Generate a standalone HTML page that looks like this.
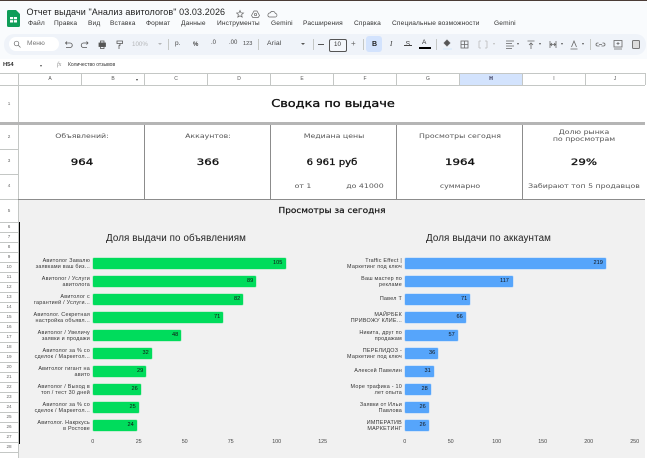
<!DOCTYPE html>
<html lang="ru"><head><meta charset="utf-8"><style>
html,body{margin:0;padding:0}
body{width:647px;height:458px;overflow:hidden;background:#fff;position:relative;font-family:"Liberation Sans",sans-serif;color:#222}
div,span{position:absolute}
.t{white-space:nowrap;line-height:1}
.m{font-size:6.6px;top:21px;color:#333;letter-spacing:.15px}
.h{font-size:5px;top:77px;color:#555;transform:translateX(-50%)}
.r{font-size:4.6px;color:#666;left:0;width:18px;text-align:center}
.l{background:#c4c7c5}
.k{font-family:"DejaVu Sans",sans-serif;color:#555;font-size:6.3px;transform:translateX(-50%) scaleX(1.24);text-align:center;line-height:7.5px;white-space:nowrap}
.v{font-family:"DejaVu Sans",sans-serif;color:#111;-webkit-text-stroke:.3px #111;font-size:9.2px;transform:translateX(-50%) scaleX(1.28);white-space:nowrap;line-height:1}
.b{height:11px;border-radius:1px}
.g{background:#00dc5c;box-shadow:0 0 0 .5px #9ce8b8}
.u{background:#56a5fb;box-shadow:0 0 0 .5px #b3d5fa}
.x{font-size:5.4px;line-height:6.5px;text-align:right;color:#333;white-space:nowrap;letter-spacing:.25px}
.n{font-size:5.6px;color:#111;line-height:1;white-space:nowrap}
.a{font-size:5.4px;color:#444;top:439.500px;transform:translateX(-50%);line-height:1}
svg{position:absolute}
.d{width:0;height:0;border:1.500px solid transparent;border-top:2px solid #555}
</style></head><body>
<div style="left:0;top:0;width:647px;height:73px;background:#f9fbfd"></div>
<div style="left:0;top:0;width:647px;height:1px;background:#4b3c36"></div>

<svg style="left:6.500px;top:10px" width="13" height="17" viewBox="0 0 13 17"><path d="M1.500 0H9l4 4v11.500a1.500 1.500 0 0 1-1.500 1.500h-10A1.500 1.500 0 0 1 0 15.500v-14A1.500 1.500 0 0 1 1.500 0z" fill="#0f9d58"/><rect x="3" y="7" width="7" height="5.500" fill="#fff"/><path d="M3 9.700h7M6.500 7v5.500" stroke="#0f9d58" stroke-width=".8"/></svg>
<span class="t" style="left:26.500px;top:7.500px;font-size:9px;color:#222;letter-spacing:.1px">Отчет выдачи "Анализ авитологов" 03.03.2026</span>
<svg style="left:236px;top:8.500px" width="50" height="10" viewBox="0 0 50 10" fill="none" stroke="#666" stroke-width=".7"><path d="M4 1.500l1 2.300 2.500.2-1.900 1.600.6 2.500L4 6.800 1.800 8.100l.6-2.500L.5 4 3 3.800z"/><path d="M18 2h3l2.500 4.500-1.300 2h-5.400l-1.300-2z"/><circle cx="19.500" cy="5.500" r="1.200"/><path d="M33 8h6a1.800 1.800 0 0 0 .3-3.600 2.800 2.800 0 0 0-5.200-.5A2.200 2.200 0 0 0 33 8z"/></svg>

<span class="t m" style="left:28px">Файл</span><span class="t m" style="left:54px">Правка</span><span class="t m" style="left:88px">Вид</span><span class="t m" style="left:110px">Вставка</span><span class="t m" style="left:146px">Формат</span><span class="t m" style="left:181px">Данные</span><span class="t m" style="left:217px">Инструменты</span><span class="t m" style="left:271px">Gemini</span><span class="t m" style="left:303px">Расширения</span><span class="t m" style="left:354px">Справка</span><span class="t m" style="left:392px">Специальные возможности</span><span class="t m" style="left:494px">Gemini</span>

<div style="left:4px;top:34px;width:642px;height:21px;border-radius:10px;background:#eff3f9"></div>
<div style="left:9px;top:37px;width:50px;height:14px;border-radius:7px;background:#fff"></div>
<svg style="left:13px;top:40px" width="9" height="9" viewBox="0 0 9 9" fill="none" stroke="#666" stroke-width=".7"><circle cx="3.500" cy="3.500" r="2.300"/><path d="M5.300 5.300L7.500 7.500"/></svg>
<span class="t" style="left:27px;top:41px;font-size:6.600px;color:#777">Меню</span>

<svg style="left:62px;top:38px" width="70" height="14" viewBox="0 0 70 14" fill="none" stroke="#555" stroke-width=".8">
<path d="M5 3.500L3.500 5 5 6.500M3.500 5H8a2.200 2.200 0 0 1 0 4.500H4"/>
<path d="M24.500 3.500L26 5l-1.500 1.500M26 5h-4.500a2.200 2.200 0 0 0 0 4.500H25"/>
<rect x="37" y="5" width="6.500" height="3.500" fill="#555"/><rect x="38.500" y="3" width="3.500" height="2"/><rect x="38.500" y="8.500" width="3.500" height="2"/>
<path d="M55 3h5.500v2.500H55zM58 5.500v2h-1v3.500"/>
</svg>
<span class="t" style="left:132px;top:41.500px;font-size:6.200px;color:#b4b6b8">100%</span>
<span style="left:158px;top:43px;width:0;height:0;border:2px solid transparent;border-top:2.500px solid #b4b6b8"></span>
<div class="l" style="left:168px;top:39px;width:.7px;height:11px"></div>
<span class="t" style="left:175px;top:41px;font-size:6.500px;color:#444">р.</span>
<span class="t" style="left:193px;top:41.500px;font-size:6px;color:#444;font-weight:bold">%</span>
<span class="t" style="left:211px;top:40px;font-size:6px;color:#444">.0</span><span class="t" style="left:229px;top:40px;font-size:6px;color:#444">.00</span>
<span class="t" style="left:243px;top:41.500px;font-size:5.600px;color:#444">123</span>
<div class="l" style="left:258px;top:39px;width:.7px;height:11px"></div>
<span class="t" style="left:267px;top:40.500px;font-size:6.800px;color:#444;letter-spacing:.2px">Arial</span>
<span style="left:301px;top:43px;width:0;height:0;border:2px solid transparent;border-top:2.500px solid #555"></span>
<div class="l" style="left:313px;top:39px;width:.7px;height:11px"></div>
<div style="left:318px;top:44px;width:6px;height:1px;background:#555"></div>
<div style="left:329px;top:38.500px;width:16px;height:11px;border:.8px solid #555;border-radius:2px;background:#f4f7fb"></div>
<span class="t" style="left:334px;top:41.500px;font-size:6.200px;color:#333">10</span>
<span class="t" style="left:351px;top:40px;font-size:8px;color:#666">+</span>
<div class="l" style="left:363px;top:39px;width:.7px;height:11px"></div>
<div style="left:366px;top:36px;width:16px;height:16px;border-radius:3px;background:#d3e3fd"></div>
<span class="t" style="left:372px;top:41px;font-size:7px;font-weight:bold;color:#222">B</span>
<span class="t" style="left:390px;top:41px;font-size:7px;font-style:italic;font-family:'Liberation Serif',serif;color:#333">I</span>
<span class="t" style="left:405.500px;top:41px;font-size:7px;color:#444">S</span><div style="left:404px;top:44.500px;width:8px;height:.8px;background:#444"></div>
<span class="t" style="left:422px;top:40px;font-size:6.500px;color:#333">A</span><div style="left:419px;top:47px;width:12px;height:1.600px;background:#000"></div>
<div class="l" style="left:436px;top:39px;width:.7px;height:11px"></div>
<svg style="left:442px;top:38px" width="204" height="13" viewBox="0 0 204 13" fill="none" stroke="#666" stroke-width=".8">
<path d="M2 5l3-3 3 3-3 3z" fill="#555"/><path d="M1 11h9" stroke="#dcecfb" stroke-width="1.400"/>
<rect x="19" y="3" width="7" height="7"/><path d="M22.500 3v7M19 6.500h7"/>
<path d="M37 3h2M37 10h2M43 3h2M43 10h2M37 3v7M45 3v7" stroke="#bbb"/>
<path d="M64 3h8M64 5.500h6M64 8h8M64 10.500h6"/>
<path d="M85.500 3h7M89 11V5"/><path d="M87 7l2-2 2 2"/>
<path d="M108 3v7M114 3v7M108 6.500h6M110 5l-1.500 1.500L110 8M112 5l1.500 1.500L112 8"/>
<path d="M129.500 9l2.500-6 2.500 6M128.500 11h7"/>
<path d="M156.500 5h-1a1.500 1.500 0 0 0 0 3h2M160.500 5h1a1.500 1.500 0 0 1 0 3h-2M157 6.500h3"/>
<rect x="172" y="2.500" width="8" height="6.500"/><path d="M176 4v3M174.500 5.500h3M172 11h8"/>
</svg>
<span class="d" style="left:492.500px;top:43px;border-top-color:#bbb"></span>
<span class="d" style="left:516.500px;top:43px"></span>
<span class="d" style="left:538.500px;top:43px"></span>
<span class="d" style="left:560.500px;top:43px"></span>
<span class="d" style="left:581.500px;top:43px"></span>
<div class="l" style="left:590px;top:39px;width:.7px;height:11px"></div>
<div style="left:632px;top:39.500px;width:6px;height:7px;border:.8px solid #777;border-radius:1.500px;background:#ddd"></div>

<div style="left:0;top:59px;width:647px;height:14px;background:#fff"></div>
<span class="t" style="left:3px;top:62.500px;font-size:5.800px;color:#333;font-weight:bold">H54</span>
<span style="left:40px;top:65px;width:0;height:0;border:1.500px solid transparent;border-top:2px solid #555"></span>
<span class="t" style="left:57px;top:62px;font-size:6px;font-style:italic;font-family:'Liberation Serif',serif;color:#888">fx</span>
<span class="t" style="left:68px;top:62.500px;font-size:5px;color:#333">Количество отзывов</span>

<div style="left:0;top:73px;width:647px;height:12px;background:#fff"></div>
<div style="left:459px;top:73.500px;width:63px;height:12px;background:#d3e3fd"></div>
<div class="l" style="left:0;top:73px;width:645px;height:.8px"></div>
<div class="l" style="left:0;top:85px;width:645px;height:1.200px"></div>
<span class="t h" style="left:50px">A</span><span class="t h" style="left:113px">B</span><span class="t h" style="left:176px">C</span><span class="t h" style="left:239px">D</span><span class="t h" style="left:302px">E</span><span class="t h" style="left:365px">F</span><span class="t h" style="left:428px">G</span><span class="t h" style="left:491px;font-weight:bold;color:#224">H</span><span class="t h" style="left:554px">I</span><span class="t h" style="left:615px">J</span>
<span style="left:136px;top:79px;width:0;height:0;border:1.500px solid transparent;border-top:2px solid #444"></span>
<div class="l" style="left:18px;top:73px;width:1px;height:385px"></div>
<div class="l" style="left:81px;top:73px;width:.8px;height:12px"></div><div class="l" style="left:144px;top:73px;width:.8px;height:12px"></div><div class="l" style="left:207px;top:73px;width:.8px;height:12px"></div><div class="l" style="left:270px;top:73px;width:.8px;height:12px"></div><div class="l" style="left:333px;top:73px;width:.8px;height:12px"></div><div class="l" style="left:396px;top:73px;width:.8px;height:12px"></div><div class="l" style="left:459px;top:73px;width:.8px;height:12px"></div><div class="l" style="left:522px;top:73px;width:.8px;height:12px"></div><div class="l" style="left:585px;top:73px;width:.8px;height:12px"></div><div class="l" style="left:645px;top:73px;width:.8px;height:12px"></div>

<span class="t" style="left:332.500px;top:98px;transform:translateX(-50%) scaleX(1.17);font-family:'DejaVu Sans',sans-serif;-webkit-text-stroke:.35px #111;font-size:11px;color:#111">Сводка по выдаче</span>
<div style="left:0;top:122px;width:645px;height:3px;background:#b5b5b5"></div>

<div style="left:18px;top:198.500px;width:627px;height:.9px;background:#8c8c8c"></div>
<div style="left:144px;top:125px;width:.9px;height:74px;background:#8c8c8c"></div><div style="left:270px;top:125px;width:.9px;height:74px;background:#8c8c8c"></div><div style="left:396px;top:125px;width:.9px;height:74px;background:#8c8c8c"></div><div style="left:522px;top:125px;width:.9px;height:74px;background:#8c8c8c"></div>

<span class="k" style="left:81.500px;top:133px">Объявлений:</span>
<span class="k" style="left:207.500px;top:133px">Аккаунтов:</span>
<span class="k" style="left:333.500px;top:133px">Медиана цены</span>
<span class="k" style="left:459.500px;top:133px">Просмотры сегодня</span>
<span class="k" style="left:584px;top:128.500px">Долю рынка<br>по просмотрам</span>
<span class="v" style="left:81.500px;top:158px">964</span>
<span class="v" style="left:207.500px;top:158px">366</span>
<span class="v" style="left:331.500px;top:158px;transform:translateX(-50%) scaleX(1.1)">6 961 руб</span>
<span class="v" style="left:459.500px;top:158px">1964</span>
<span class="v" style="left:584px;top:158px">29%</span>
<span class="k" style="left:302.500px;top:183px">от 1</span>
<span class="k" style="left:365px;top:183px">до 41000</span>
<span class="k" style="left:459.500px;top:183px">суммарно</span>
<span class="k" style="left:584.300px;top:183px">Забирают топ 5 продавцов</span>

<div style="left:19px;top:199.500px;width:626px;height:258.500px;background:#f1f1f1"></div>
<span class="v" style="left:332px;top:207px;font-size:8px;-webkit-text-stroke:.2px #111;transform:translateX(-50%) scaleX(1.12)">Просмотры за сегодня</span>
<div style="left:19px;top:222px;width:1px;height:222px;background:#000"></div>

<div class="l" style="left:0;top:149px;width:18px;height:.8px"></div><div class="l" style="left:0;top:174px;width:18px;height:.8px"></div><div class="l" style="left:0;top:199px;width:18px;height:.8px"></div><div class="l" style="left:0;top:222px;width:18px;height:.8px"></div><div class="l" style="left:0;top:232px;width:18px;height:.8px"></div><div class="l" style="left:0;top:242px;width:18px;height:.8px"></div><div class="l" style="left:0;top:252px;width:18px;height:.8px"></div><div class="l" style="left:0;top:262px;width:18px;height:.8px"></div><div class="l" style="left:0;top:272px;width:18px;height:.8px"></div><div class="l" style="left:0;top:282px;width:18px;height:.8px"></div><div class="l" style="left:0;top:292px;width:18px;height:.8px"></div><div class="l" style="left:0;top:302px;width:18px;height:.8px"></div><div class="l" style="left:0;top:312px;width:18px;height:.8px"></div><div class="l" style="left:0;top:322px;width:18px;height:.8px"></div><div class="l" style="left:0;top:332px;width:18px;height:.8px"></div><div class="l" style="left:0;top:342px;width:18px;height:.8px"></div><div class="l" style="left:0;top:352px;width:18px;height:.8px"></div><div class="l" style="left:0;top:362px;width:18px;height:.8px"></div><div class="l" style="left:0;top:372px;width:18px;height:.8px"></div><div class="l" style="left:0;top:382px;width:18px;height:.8px"></div><div class="l" style="left:0;top:392px;width:18px;height:.8px"></div><div class="l" style="left:0;top:402px;width:18px;height:.8px"></div><div class="l" style="left:0;top:412px;width:18px;height:.8px"></div><div class="l" style="left:0;top:422px;width:18px;height:.8px"></div><div class="l" style="left:0;top:432px;width:18px;height:.8px"></div><div class="l" style="left:0;top:442px;width:18px;height:.8px"></div><div class="l" style="left:0;top:452px;width:18px;height:.8px"></div>

<span class="t r" style="top:101.500px">1</span><span class="t r" style="top:135px">2</span><span class="t r" style="top:159px">3</span><span class="t r" style="top:184px">4</span><span class="t r" style="top:208.500px">5</span><span class="t r" style="top:225px">6</span><span class="t r" style="top:235px">7</span><span class="t r" style="top:245px">8</span><span class="t r" style="top:255px">9</span><span class="t r" style="top:265px">10</span><span class="t r" style="top:275px">11</span><span class="t r" style="top:285px">12</span><span class="t r" style="top:295px">13</span><span class="t r" style="top:305px">14</span><span class="t r" style="top:315px">15</span><span class="t r" style="top:325px">16</span><span class="t r" style="top:335px">17</span><span class="t r" style="top:345px">18</span><span class="t r" style="top:355px">19</span><span class="t r" style="top:365px">20</span><span class="t r" style="top:375px">21</span><span class="t r" style="top:385px">22</span><span class="t r" style="top:395px">23</span><span class="t r" style="top:405px">24</span><span class="t r" style="top:415px">25</span><span class="t r" style="top:425px">26</span><span class="t r" style="top:435px">27</span><span class="t r" style="top:445px">28</span>

<span class="t" style="left:176px;top:234px;font-size:9.800px;color:#222;transform:translateX(-50%);letter-spacing:.12px">Доля выдачи по объявлениям</span>
<span class="t" style="left:488.500px;top:234px;font-size:9.800px;color:#222;transform:translateX(-50%);letter-spacing:.12px">Доля выдачи по аккаунтам</span>

<!-- left bars -->
<div class="b g" style="left:93px;top:258px;width:192.500px"></div><span class="n" style="left:273px;top:261px">105</span>
<div class="b g" style="left:93px;top:276px;width:163px"></div><span class="n" style="left:247px;top:279px">89</span>
<div class="b g" style="left:93px;top:294px;width:150px"></div><span class="n" style="left:234px;top:297px">82</span>
<div class="b g" style="left:93px;top:312px;width:130px"></div><span class="n" style="left:214px;top:315px">71</span>
<div class="b g" style="left:93px;top:330px;width:88px"></div><span class="n" style="left:172px;top:333px">48</span>
<div class="b g" style="left:93px;top:348px;width:58.500px"></div><span class="n" style="left:142.500px;top:351px">32</span>
<div class="b g" style="left:93px;top:366px;width:53px"></div><span class="n" style="left:137px;top:369px">29</span>
<div class="b g" style="left:93px;top:384px;width:47.500px"></div><span class="n" style="left:131.500px;top:387px">26</span>
<div class="b g" style="left:93px;top:402px;width:45.500px"></div><span class="n" style="left:129.500px;top:405px">25</span>
<div class="b g" style="left:93px;top:420px;width:43.500px"></div><span class="n" style="left:127.500px;top:423px">24</span>

<div class="x" style="right:557px;top:257.500px">Авитолог Завалю<br>заявками ваш биз...</div>
<div class="x" style="right:557px;top:275.500px">Авитолог / Услуги<br>авитолога</div>
<div class="x" style="right:557px;top:293.500px">Авитолог с<br>гарантией / Услуги...</div>
<div class="x" style="right:557px;top:311.500px">Авитолог. Секретная<br>настройка объявл...</div>
<div class="x" style="right:557px;top:329.500px">Авитолог / Увеличу<br>заявки и продажи</div>
<div class="x" style="right:557px;top:347.500px">Авитолог за % со<br>сделок / Маркетол...</div>
<div class="x" style="right:557px;top:365.500px">Авитолог гигант на<br>авито</div>
<div class="x" style="right:557px;top:383.500px">Авитолог / Выход в<br>топ / тест 30 дней</div>
<div class="x" style="right:557px;top:401.500px">Авитолог за % со<br>сделок / Маркетол...</div>
<div class="x" style="right:557px;top:419.500px">Авитолог. Накркусь<br>в Ростове</div>

<span class="a" style="left:92.700px">0</span><span class="a" style="left:138.700px">25</span><span class="a" style="left:184.700px">50</span><span class="a" style="left:230.700px">75</span><span class="a" style="left:276.700px">100</span><span class="a" style="left:322.700px">125</span>

<!-- right bars -->
<div class="b u" style="left:405px;top:258px;width:201px"></div><span class="n" style="left:593.500px;top:261px">219</span>
<div class="b u" style="left:405px;top:276px;width:107.500px"></div><span class="n" style="left:500px;top:279px">117</span>
<div class="b u" style="left:405px;top:294px;width:65px"></div><span class="n" style="left:461px;top:297px">71</span>
<div class="b u" style="left:405px;top:312px;width:60.500px"></div><span class="n" style="left:456.500px;top:315px">66</span>
<div class="b u" style="left:405px;top:330px;width:52.500px"></div><span class="n" style="left:448.500px;top:333px">57</span>
<div class="b u" style="left:405px;top:348px;width:33px"></div><span class="n" style="left:429px;top:351px">36</span>
<div class="b u" style="left:405px;top:366px;width:28.500px"></div><span class="n" style="left:424.500px;top:369px">31</span>
<div class="b u" style="left:405px;top:384px;width:25.700px"></div><span class="n" style="left:421.500px;top:387px">28</span>
<div class="b u" style="left:405px;top:402px;width:23.800px"></div><span class="n" style="left:419.500px;top:405px">26</span>
<div class="b u" style="left:405px;top:420px;width:23.800px"></div><span class="n" style="left:419.500px;top:423px">26</span>

<div class="x" style="right:245px;top:257.500px">Traffic Effect |<br>Маркетинг под ключ</div>
<div class="x" style="right:245px;top:275.500px">Ваш мастер по<br>рекламе</div>
<div class="x" style="right:245px;top:296px">Павел Т</div>
<div class="x" style="right:245px;top:311.500px">МАЙРБЕК<br>ПРИВОЖУ КЛИЕ...</div>
<div class="x" style="right:245px;top:329.500px">Никита, друг по<br>продажам</div>
<div class="x" style="right:245px;top:347.500px">ПЕРЕЛИДОЗ -<br>Маркетинг под ключ</div>
<div class="x" style="right:245px;top:368px">Алексей Павелин</div>
<div class="x" style="right:245px;top:383.500px">Море трафика - 10<br>лет опыта</div>
<div class="x" style="right:245px;top:401.500px">Заявки от Ильи<br>Павлова</div>
<div class="x" style="right:245px;top:419.500px">ИМПЕРАТИВ<br>МАРКЕТИНГ</div>

<span class="a" style="left:404.700px">0</span><span class="a" style="left:450.700px">50</span><span class="a" style="left:496.700px">100</span><span class="a" style="left:542.700px">150</span><span class="a" style="left:588.700px">200</span><span class="a" style="left:634.700px">250</span>
</body></html>
